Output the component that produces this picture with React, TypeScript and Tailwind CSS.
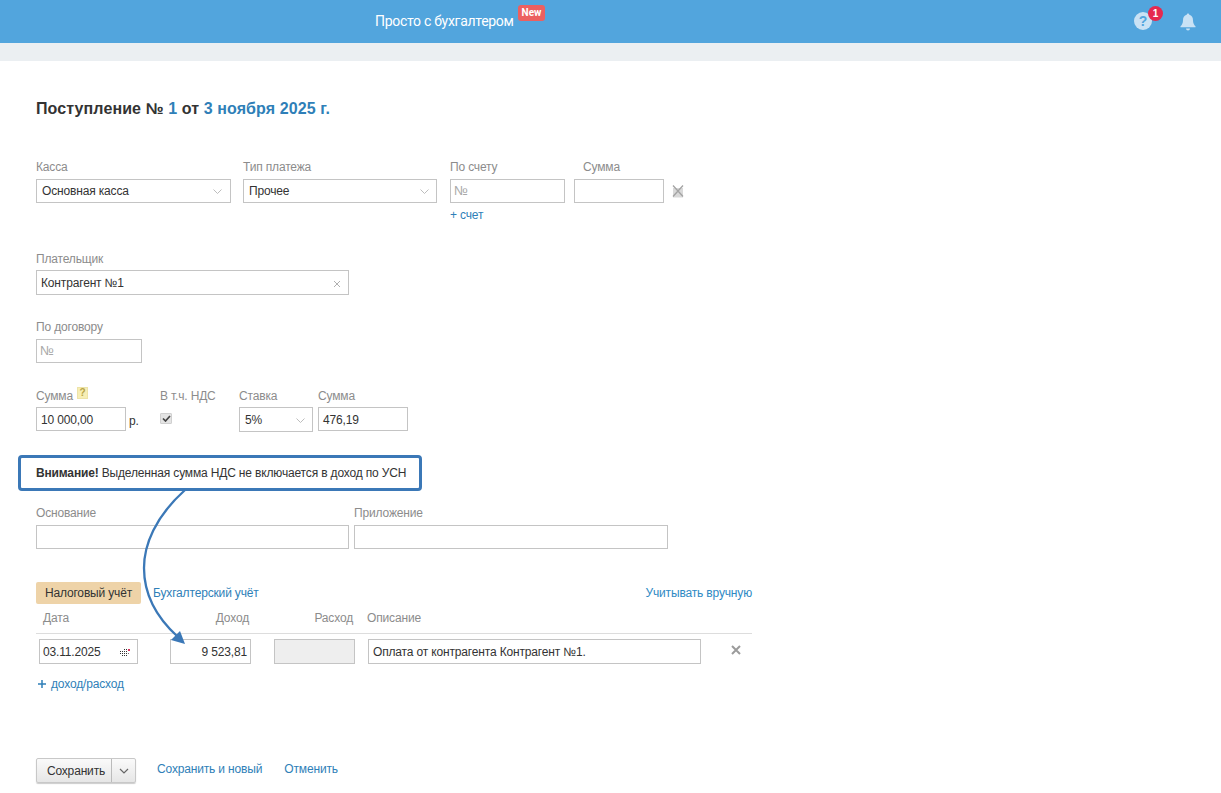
import React from "react";

const Label = ({ children, className = "" }: { children: React.ReactNode; className?: string }) => (
  <div className={`h-[16px] leading-[16px] text-[12px] text-[#8c8c8c] ${className}`}>{children}</div>
);

const Box = ({ children, className = "" }: { children?: React.ReactNode; className?: string }) => (
  <div className={`flex items-center border border-[#c4c4c4] text-[12px] text-[#333333] ${className}`}>{children}</div>
);

const Chevron = ({ className = "" }: { className?: string }) => (
  <svg width="9" height="5" viewBox="0 0 9 5" className={`ml-auto ${className}`}>
    <path d="M0.500 0.500l4 4 4-4" fill="none" stroke="#bdbdbd" strokeWidth="1" />
  </svg>
);

export default function App() {
  return (
    <div className="relative h-[793px] w-[1221px] overflow-hidden bg-white font-['Liberation_Sans',Arial,sans-serif]">
      <header className="flex h-[43px] items-center bg-[#52a5dd] pl-[375px] pr-[25px]">
        <div className="relative mb-[2px] font-['Roboto',sans-serif] text-[14px] leading-[20px] tracking-[-0.3px] text-white">
          Просто с бухгалтером
          <span className="absolute left-[143px] top-[-6px] flex h-[16px] w-[27px] items-center justify-center rounded-[3px] bg-[#ec6060] text-[10px] font-bold tracking-normal text-white">New</span>
        </div>
        <div className="relative mb-[1px] ml-auto mr-[28px] h-[18px] w-[18px]">
          <svg width="18" height="18" viewBox="0 0 18 18">
            <circle cx="9" cy="9" r="9" fill="#c9e2f5" />
            <text x="9" y="14" textAnchor="middle" fontSize="14" fontWeight="700" fontFamily="Liberation Sans" fill="#52a5dd">?</text>
          </svg>
          <span className="absolute left-[14px] top-[-6px] flex h-[15px] w-[15px] items-center justify-center rounded-full bg-[#e5294f] text-[10px] font-bold text-white">1</span>
        </div>
        <svg width="16" height="18" viewBox="0 0 16 18">
          <path d="M8 0.500a1.300 1.300 0 0 1 1.300 1.300c2.600.6 3.700 2.800 3.700 5.400 0 3 1 4.600 2.500 6v1H.5v-1c1.500-1.400 2.500-3 2.500-6 0-2.600 1.100-4.800 3.700-5.400A1.300 1.300 0 0 1 8 .5z" fill="#c9e2f5" />
          <path d="M6 15.500h4a2 2 0 0 1-4 0z" fill="#c9e2f5" />
        </svg>
      </header>
      <div className="h-[18px] bg-[#ebeff2]" />

      <main className="relative pl-[36px] text-[12px] tracking-[-0.16px]">
        <h1 className="mt-[38px] h-[20px] text-[16px] font-bold leading-[20px] tracking-[0.1px] text-[#333333]">
          Поступление № <span className="text-[#2f7fb8]">1</span> от <span className="text-[#2f7fb8]">3 ноября 2025 г.</span>
        </h1>

        <div className="mt-[40px] flex items-start">
          <div className="w-[195px]">
            <Label className="mb-[4px]">Касса</Label>
            <Box className="h-[24px] px-[5px]">Основная касса<Chevron className="mr-[3px]" /></Box>
          </div>
          <div className="ml-[12px] w-[194px]">
            <Label className="mb-[4px]">Тип платежа</Label>
            <Box className="h-[24px] px-[5px]">Прочее<Chevron className="mr-[2px]" /></Box>
          </div>
          <div className="ml-[13px] w-[115px]">
            <Label className="mb-[4px]">По счету</Label>
            <Box className="h-[24px] px-[3px] text-[13px] text-[#a8a8a8]">№</Box>
            <div className="mt-[4px] h-[16px] leading-[16px] text-[#2f7fb8]">+ счет</div>
          </div>
          <div className="ml-[9px] w-[90px]">
            <Label className="mb-[4px] pl-[9px]">Сумма</Label>
            <Box className="h-[24px]" />
          </div>
          <svg width="12" height="14" viewBox="0 0 12 14" className="ml-[8px] mt-[25px]">
            <rect x="1" y="4" width="10" height="9.500" fill="#d9d9d9" />
            <path d="M1 1.500l10 11M11 1.500l-10 11" stroke="#a3a3a3" strokeWidth="1.300" />
          </svg>
        </div>

        <div className="mt-[28px]">
          <Label className="mb-[3px]">Плательщик</Label>
          <Box className="h-[25px] w-[313px] px-[4px]">
            Контрагент №1
            <svg width="8" height="8" viewBox="0 0 8 8" className="ml-auto mr-[3px] mt-[2px]">
              <path d="M1 1l6 6M7 1l-6 6" stroke="#b0b0b0" strokeWidth="1" />
            </svg>
          </Box>
        </div>

        <div className="mt-[24px]">
          <Label className="mb-[4px]">По договору</Label>
          <Box className="h-[24px] w-[106px] px-[3px] text-[13px] text-[#a8a8a8]">№</Box>
        </div>

        <div className="mt-[25px] flex items-start">
          <div className="w-[90px]">
            <Label className="mb-[3px] flex items-center gap-[4px]">
              Сумма
              <span className="mb-[6px] flex h-[12px] w-[11px] items-center justify-center border border-[#ede3a8] bg-[#f7eeb5] text-[10px] font-bold text-[#b8a548]">?</span>
            </Label>
            <Box className="h-[24px] px-[4px] pt-[1px]">10 000,00</Box>
          </div>
          <div className="ml-[3px] mt-[20px] h-[24px] w-[31px] leading-[27px] text-[#333333]">р.</div>
          <div className="w-[79px]">
            <Label className="mb-[9px]">В т.ч. НДС</Label>
            <div className="flex h-[11px] w-[12px] items-center justify-center rounded-[1px] border border-[#d0d0d0] bg-[#e4e4e4]">
              <svg width="9" height="7" viewBox="0 0 9 7">
                <path d="M1 3.500l2.500 2.500L8 1" fill="none" stroke="#444444" strokeWidth="1.700" />
              </svg>
            </div>
          </div>
          <div className="w-[74px]">
            <Label className="mb-[3px]">Ставка</Label>
            <Box className="h-[25px] px-[5px]">5%<Chevron className="mr-[2px] mt-[2px]" /></Box>
          </div>
          <div className="ml-[5px] w-[90px]">
            <Label className="mb-[3px]">Сумма</Label>
            <Box className="h-[24px] px-[4px] pt-[1px]">476,19</Box>
          </div>
        </div>

        <div className="-ml-[18px] mt-[23px] flex h-[36px] w-[404px] items-center rounded-[4px] border-[3px] border-[#3b78b7] bg-white pl-[15px] text-[#333333]">
          <b>Внимание!</b>&nbsp;Выделенная сумма НДС не включается в доход по УСН
        </div>

        <div className="mt-[14px] flex">
          <div className="w-[313px]">
            <Label className="mb-[4px]">Основание</Label>
            <Box className="h-[24px]" />
          </div>
          <div className="ml-[5px] w-[314px]">
            <Label className="mb-[4px]">Приложение</Label>
            <Box className="h-[24px]" />
          </div>
        </div>

        <div className="mt-[33px] w-[716px]">
          <div className="flex h-[22px] items-center">
            <div className="flex h-[22px] w-[105px] items-center justify-center rounded-[2px] bg-[#eed3a8] text-[#333333]">Налоговый учёт</div>
            <div className="ml-[12px] text-[#2f7fb8]">Бухгалтерский учёт</div>
            <div className="ml-auto text-[#2f8ac4]">Учитывать вручную</div>
          </div>
          <div className="flex h-[30px] items-center border-b border-[#dddddd] pb-[1px] text-[#8c8c8c]">
            <div className="ml-[7px] w-[100px]">Дата</div>
            <div className="w-[106px] text-right">Доход</div>
            <div className="w-[104px] text-right">Расход</div>
            <div className="ml-[14px]">Описание</div>
          </div>
          <div className="mt-[5px] flex items-start">
            <Box className="ml-[3px] h-[25px] w-[99px] pl-[3px] pr-[7px]">
              03.11.2025
              <svg width="10" height="8" viewBox="0 0 10 8" className="ml-auto mt-[1px]" shapeRendering="crispEdges">
                <path d="M4 1h1v1H4zM6 1h1v1H6zM2 3h1v1H2zM4 3h1v1H4zM6 3h1v1H6zM0 3h1v1H0zM0 5h1v1H0zM2 5h1v1H2zM4 5h1v1H4zM6 5h1v1H6zM2 7h1v1H2zM4 7h1v1H4zM6 7h1v1H6z" fill="#333333" />
                <path d="M8 1h2v2H8z" fill="#d8345f" />
                <path d="M8 5h1v1H8z" fill="#777777" />
              </svg>
            </Box>
            <Box className="ml-[32px] h-[25px] w-[81px] justify-end pr-[3px]">9 523,81</Box>
            <Box className="ml-[23px] h-[25px] w-[81px] bg-[#eeeeee]" />
            <Box className="ml-[13px] h-[25px] w-[333px] px-[4px]">Оплата от контрагента Контрагент №1.</Box>
            <svg width="10" height="10" viewBox="0 0 10 10" className="ml-[30px] mt-[6px]">
              <path d="M1 1l8 8M9 1l-8 8" stroke="#9b9b9b" strokeWidth="2" />
            </svg>
          </div>
          <div className="mt-[12px] flex h-[16px] items-center text-[#2f7fb8]">
            <svg width="10" height="10" viewBox="0 0 10 10" className="ml-[1px] mr-[4px]">
              <path d="M5 1v8M1 5h8" stroke="#2f7fb8" strokeWidth="1.500" />
            </svg>
            доход/расход
          </div>
        </div>

        <div className="mt-[66px] flex items-start">
          <div className="flex h-[25px] w-[100px] rounded-[2px] border border-[#c8c8c8] bg-gradient-to-b from-[#fafafa] to-[#e6e6e6] shadow-[0_1px_1px_rgba(0,0,0,0.2)]">
            <div className="flex w-[75px] items-center justify-center border-r border-[#bbbbbb] pl-[4px] text-[#333333]">Сохранить</div>
            <div className="flex flex-1 items-center justify-center">
              <svg width="10" height="6" viewBox="0 0 10 6"><path d="M1 1l4 4 4-4" fill="none" stroke="#666666" strokeWidth="1.200" /></svg>
            </div>
          </div>
          <div className="ml-[21px] mt-[2px] text-[#2f7fb8]">Сохранить и новый</div>
          <div className="ml-[22px] mt-[2px] text-[#2f7fb8]">Отменить</div>
        </div>
      </main>

      <svg width="1221" height="793" viewBox="0 0 1221 793" className="pointer-events-none absolute left-0 top-0">
        <path d="M185 490C155 517 144 545 144 568C144 595 157 618 178 637" fill="none" stroke="#3b78b7" strokeWidth="2.300" />
        <path d="M185 644L180 631L171 640Z" fill="#3b78b7" />
      </svg>
    </div>
  );
}
